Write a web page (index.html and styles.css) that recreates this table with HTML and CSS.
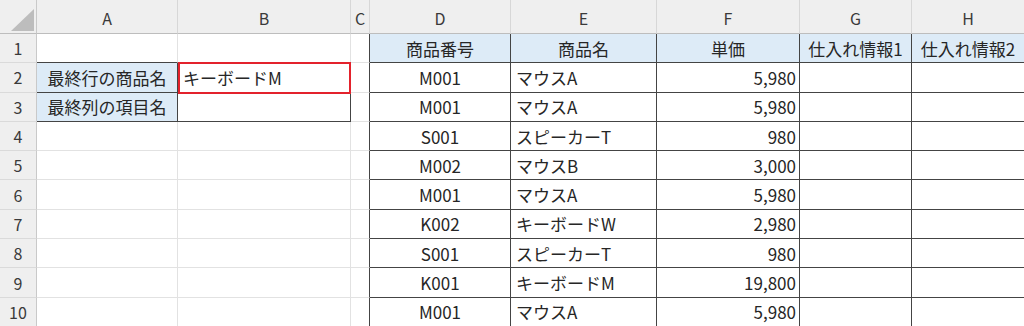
FILE: index.html
```html
<!DOCTYPE html>
<html lang="ja">
<head>
<meta charset="utf-8">
<title>Sheet</title>
<link rel="stylesheet" href="styles.css">
</head>
<body>
<div class="sheet">
  <div class="cell corner"><svg class="tri" width="23" height="22" viewBox="0 0 23 22"><polygon points="0,22 23,0 23,22" fill="#bdbdbd"/></svg></div>
  <div class="cell colhdr">A</div>
  <div class="cell colhdr">B</div>
  <div class="cell colhdr">C</div>
  <div class="cell colhdr">D</div>
  <div class="cell colhdr">E</div>
  <div class="cell colhdr">F</div>
  <div class="cell colhdr">G</div>
  <div class="cell colhdr">H</div>

  <div class="cell rowhdr">1</div>
  <div class="cell dk-b"></div>
  <div class="cell dk-b"></div>
  <div class="cell dk-r"></div>
  <div class="cell t head center">商品番号</div>
  <div class="cell t head center">商品名</div>
  <div class="cell t head center">単価</div>
  <div class="cell t head center">仕入れ情報1</div>
  <div class="cell t head center">仕入れ情報2</div>

  <div class="cell rowhdr">2</div>
  <div class="cell t blue center">最終行の商品名</div>
  <div class="cell t left sel">キーボードM</div>
  <div class="cell dk-r"></div>
  <div class="cell t center">M001</div>
  <div class="cell t left">マウスA</div>
  <div class="cell t right">5,980</div>
  <div class="cell t"></div>
  <div class="cell t"></div>

  <div class="cell rowhdr">3</div>
  <div class="cell t blue center">最終列の項目名</div>
  <div class="cell t left"></div>
  <div class="cell dk-r"></div>
  <div class="cell t center">M001</div>
  <div class="cell t left">マウスA</div>
  <div class="cell t right">5,980</div>
  <div class="cell t"></div>
  <div class="cell t"></div>

  <div class="cell rowhdr">4</div>
  <div class="cell"></div>
  <div class="cell"></div>
  <div class="cell dk-r"></div>
  <div class="cell t center">S001</div>
  <div class="cell t left">スピーカーT</div>
  <div class="cell t right">980</div>
  <div class="cell t"></div>
  <div class="cell t"></div>

  <div class="cell rowhdr">5</div>
  <div class="cell"></div>
  <div class="cell"></div>
  <div class="cell dk-r"></div>
  <div class="cell t center">M002</div>
  <div class="cell t left">マウスB</div>
  <div class="cell t right">3,000</div>
  <div class="cell t"></div>
  <div class="cell t"></div>

  <div class="cell rowhdr">6</div>
  <div class="cell"></div>
  <div class="cell"></div>
  <div class="cell dk-r"></div>
  <div class="cell t center">M001</div>
  <div class="cell t left">マウスA</div>
  <div class="cell t right">5,980</div>
  <div class="cell t"></div>
  <div class="cell t"></div>

  <div class="cell rowhdr">7</div>
  <div class="cell"></div>
  <div class="cell"></div>
  <div class="cell dk-r"></div>
  <div class="cell t center">K002</div>
  <div class="cell t left">キーボードW</div>
  <div class="cell t right">2,980</div>
  <div class="cell t"></div>
  <div class="cell t"></div>

  <div class="cell rowhdr">8</div>
  <div class="cell"></div>
  <div class="cell"></div>
  <div class="cell dk-r"></div>
  <div class="cell t center">S001</div>
  <div class="cell t left">スピーカーT</div>
  <div class="cell t right">980</div>
  <div class="cell t"></div>
  <div class="cell t"></div>

  <div class="cell rowhdr">9</div>
  <div class="cell"></div>
  <div class="cell"></div>
  <div class="cell dk-r"></div>
  <div class="cell t center">K001</div>
  <div class="cell t left">キーボードM</div>
  <div class="cell t right">19,800</div>
  <div class="cell t"></div>
  <div class="cell t"></div>

  <div class="cell rowhdr">10</div>
  <div class="cell"></div>
  <div class="cell"></div>
  <div class="cell dk-r"></div>
  <div class="cell t center">M001</div>
  <div class="cell t left">マウスA</div>
  <div class="cell t right">5,980</div>
  <div class="cell t"></div>
  <div class="cell t"></div>
</div>
</body>
</html>
```
FILE: styles.css
```css
html, body {
  margin: 0;
  padding: 0;
  background: #ffffff;
  overflow: hidden;
}
body {
  font-family: "Noto Sans CJK JP", "Noto Sans", sans-serif;
  color: #262626;
}
.sheet {
  display: grid;
  grid-template-columns: 37px 141px 173px 19px 141px 146px 143px 112px 113px;
  grid-template-rows: 34px repeat(10, 29.3px);
  width: 1025px;
}
.cell {
  box-sizing: border-box;
  border-right: 1px solid #e2e2e2;
  border-bottom: 1px solid #e2e2e2;
  display: flex;
  align-items: center;
  font-size: 17px;
  white-space: nowrap;
  overflow: visible;
  min-width: 0;
}
.corner {
  background: #efefef;
  border-right: 1px solid #c9c9c9;
  border-bottom: 1px solid #bdbdbd;
  align-items: flex-end;
  justify-content: flex-end;
  padding: 0 2px 2px 0;
}
.tri { display: block; }
.colhdr {
  background: #efefef;
  border-right: 1px solid #d7d7d7;
  border-bottom: 1px solid #bdbdbd;
  justify-content: center;
  font-size: 16px;
  color: #3a3a3a;
  padding-top: 2px;
}
.rowhdr {
  background: #efefef;
  border-right: 1px solid #c9c9c9;
  border-bottom: 1px solid #dadada;
  justify-content: center;
  font-size: 16px;
  color: #3a3a3a;
}
.dk-b { border-bottom-color: #444444; }
.dk-r { border-right-color: #444444; }
.t {
  border-right-color: #444444;
  border-bottom-color: #444444;
}
.head { background: #ddebf7; }
.blue { background: #ddebf7; }
.center { justify-content: center; }
.left { justify-content: flex-start; padding-left: 5px; }
.right { justify-content: flex-end; padding-right: 3px; }
.sel { position: relative; }
.sel::after {
  content: "";
  position: absolute;
  top: -1px;
  left: 0;
  right: -1px;
  bottom: -2px;
  border: 2px solid #e3222c;
  pointer-events: none;
}
```
